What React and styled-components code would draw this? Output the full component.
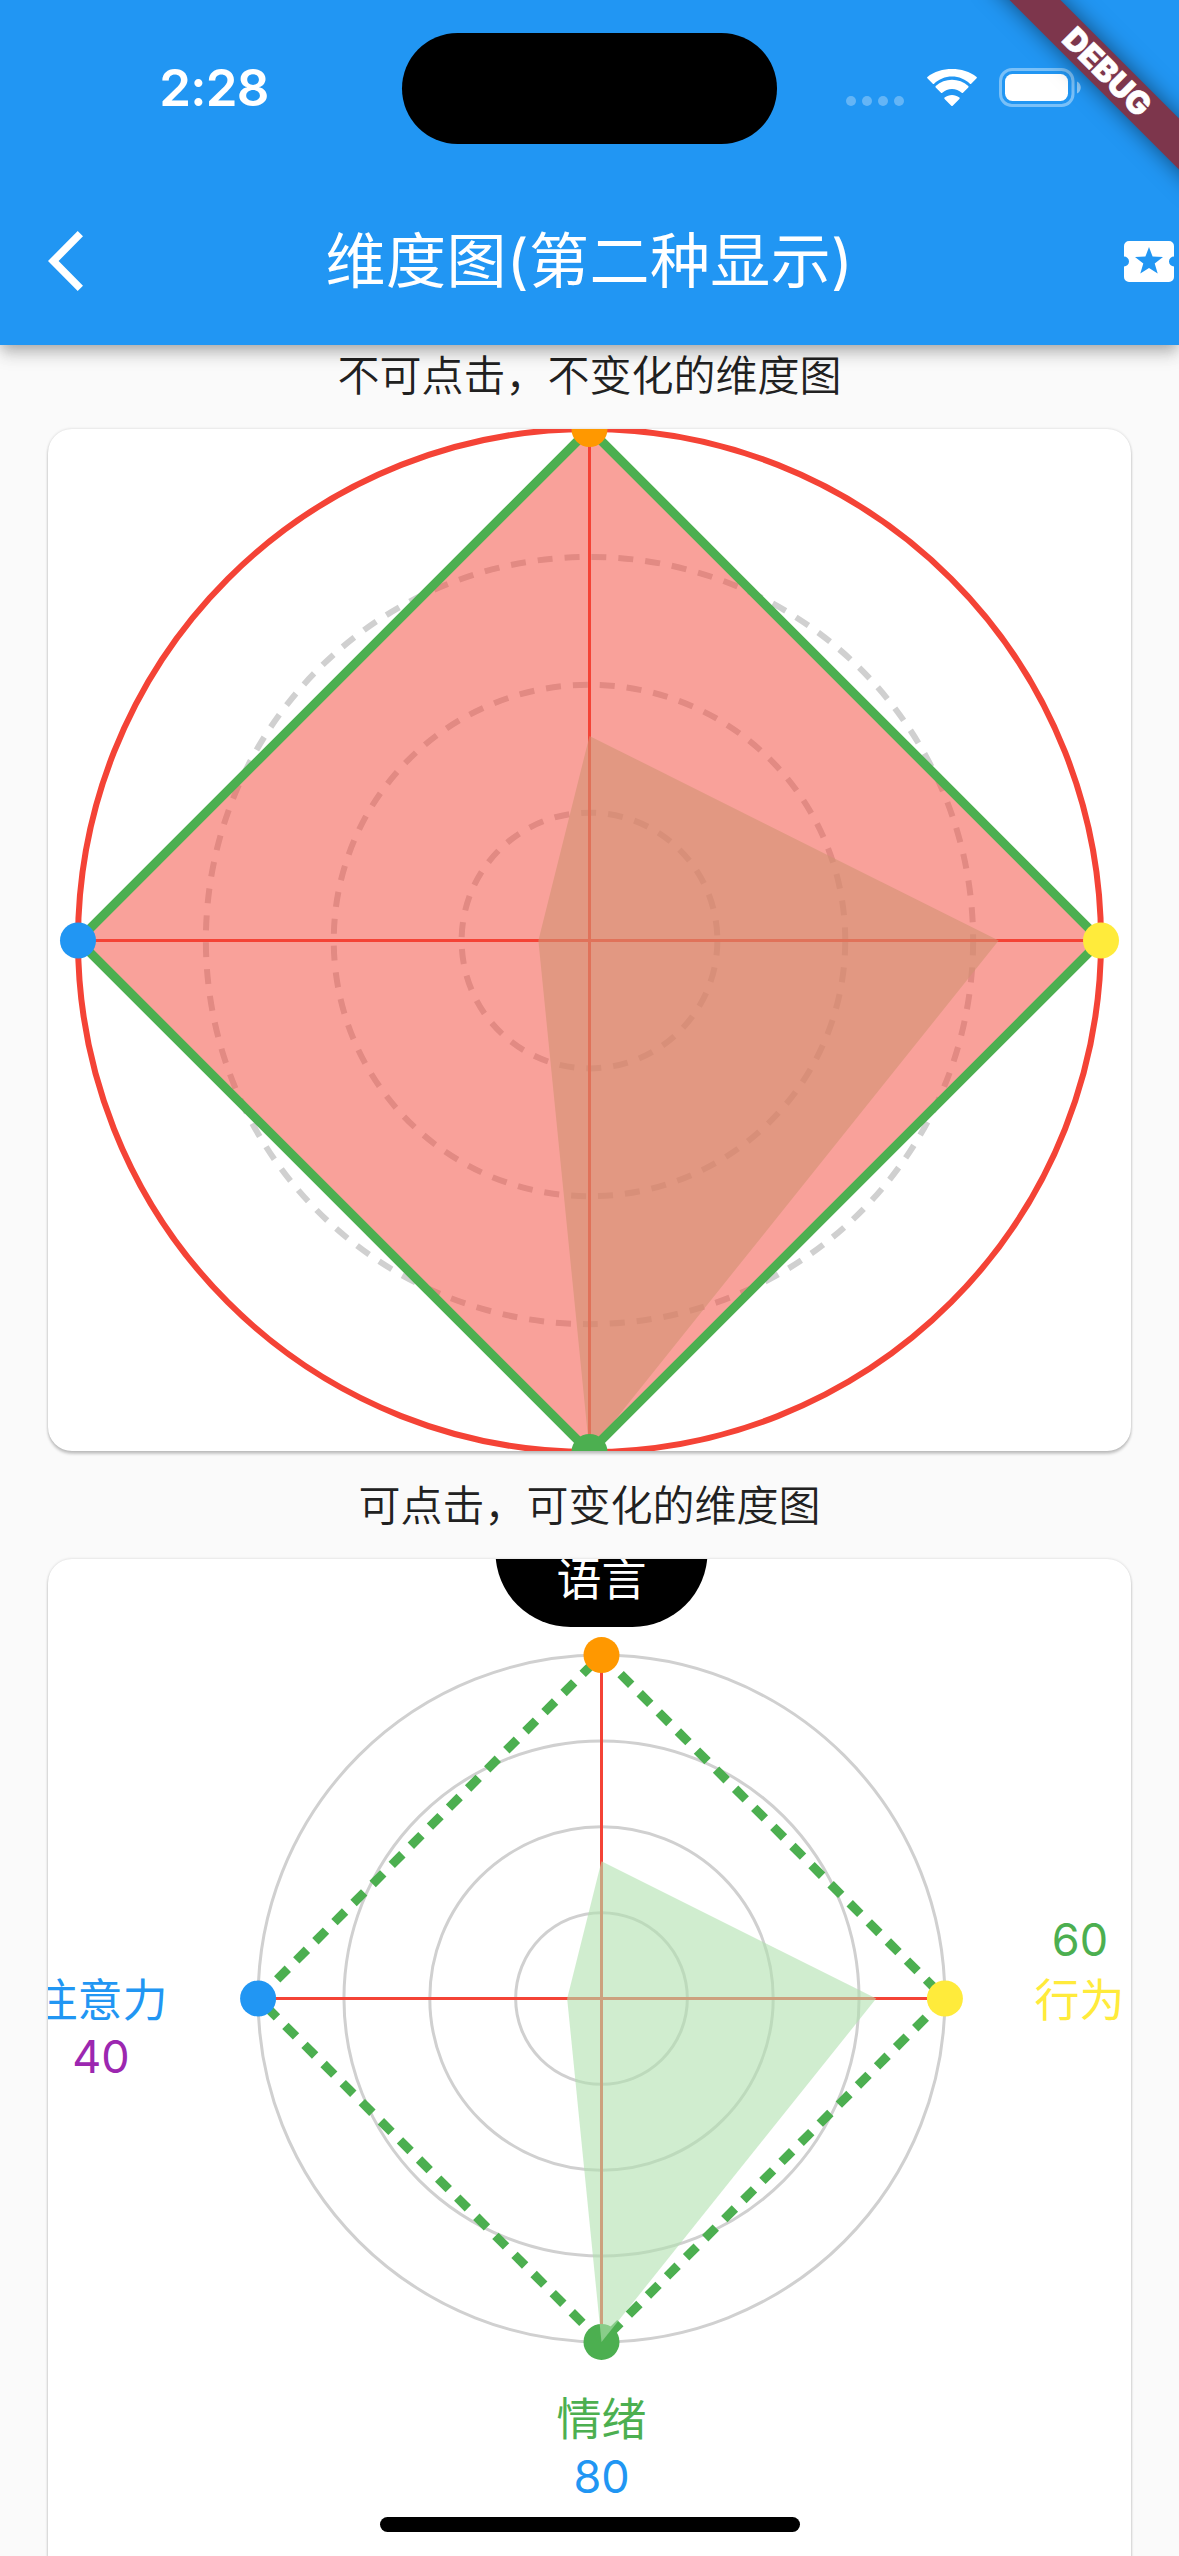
import React from "react";
import styled, { createGlobalStyle } from "styled-components";

const GlobalStyle = createGlobalStyle`
  html, body { margin: 0; padding: 0; background: #fafafa; }
  body { overflow: hidden; }
  * { box-sizing: border-box; }
`;

const FONT = `Inter, "Noto Sans CJK SC", sans-serif`;

const Screen = styled.div`
  position: relative;
  display: flex;
  flex-direction: column;
  width: 1179px;
  height: 2556px;
  overflow: hidden;
  background: #fafafa;
  font-family: ${FONT};
`;

const Header = styled.header`
  position: relative;
  z-index: 1;
  flex: none;
  height: 345px;
  background: #2196f3;
  color: #fff;
  box-shadow: 0 6px 12px -3px rgba(0, 0, 0, 0.2), 0 12px 15px rgba(0, 0, 0, 0.1),
    0 3px 20px rgba(0, 0, 0, 0.1);
`;

const StatusBar = styled.div`
  display: grid;
  grid-template-columns: 402px 375px 402px;
  align-items: center;
  height: 177px;
`;

const Clock = styled.div`
  padding-left: 26px;
  text-align: center;
  font-size: 51px;
  line-height: 58px;
  padding-bottom: 2px;
  font-weight: 600;
  letter-spacing: -0.8px;
`;

const Island = styled.div`
  height: 111px;
  border-radius: 56px;
  background: #000;
`;

const StatusIcons = styled.div`
  display: flex;
  align-items: center;
  height: 40px;
  padding-left: 69px;
`;

const Signal = styled.div`
  display: flex;
  align-self: flex-end;
  gap: 6px;
  margin: 0 23px 3px 0;
`;

const SignalDot = styled.i`
  width: 10px;
  height: 10px;
  border-radius: 50%;
  background: rgba(255, 255, 255, 0.3);
`;

const NavBar = styled.div`
  display: grid;
  grid-template-columns: 120px 1fr 120px;
  align-items: center;
  height: 168px;
`;

const BackButton = styled.button`
  display: flex;
  padding: 0 0 0 48px;
  border: 0;
  background: none;
`;

const Title = styled.h1`
  margin: 0;
  text-align: center;
  font-size: 60px;
  line-height: 72px;
  font-weight: 400;
  letter-spacing: 0.4px;
  white-space: nowrap;
`;

const Action = styled.button`
  display: flex;
  justify-content: flex-end;
  padding: 0 5px 0 0;
  border: 0;
  background: none;
`;

const Ribbon = styled.div`
  position: absolute;
  top: 54px;
  left: 957px;
  z-index: 2;
  width: 300px;
  height: 36px;
  transform: rotate(45deg);
  background: #7d364c;
  box-shadow: 0 0 22px rgba(0, 0, 0, 0.5);
  color: #fff;
  text-align: center;
  font-size: 31.5px;
  line-height: 36px;
  font-weight: 900;
  -webkit-text-stroke: 0.6px #fff;
`;

const Body = styled.main`
  display: flex;
  flex-direction: column;
`;

const Caption = styled.p`
  height: ${(p) => p.$height}px;
  margin: 0;
  padding-top: ${(p) => p.$top}px;
  text-align: center;
  font-size: 42px;
  line-height: 60px;
  font-weight: 350;
  color: #212121;
`;

const Card = styled.section`
  flex: none;
  margin: 0 48px;
  height: 1022px;
  border-radius: 24px;
  overflow: hidden;
  background: #fff;
  box-shadow: 0 3px 3px rgba(0, 0, 0, 0.2), 0 0 3px rgba(0, 0, 0, 0.16);
`;

const Chart = styled.svg`
  display: block;
  width: 1083px;
  height: 1023px;
`;

const ChartText = styled.text`
  font-family: ${FONT};
  font-size: 45px;
  text-anchor: middle;
  fill: ${(p) => p.$color};
`;

const HomeIndicator = styled.div`
  position: absolute;
  left: 380px;
  bottom: 24px;
  width: 420px;
  height: 15px;
  border-radius: 8px;
  background: #000;
`;

const VALUES = [0.4, 0.8, 1, 0.1];
const DOT_COLORS = ["#ff9800", "#ffeb3b", "#4caf50", "#2196f3"];

function vertices(cx, cy, r, values) {
  const [t, ri, b, l] = values;
  return [
    [cx, cy - r * t],
    [cx + r * ri, cy],
    [cx, cy + r * b],
    [cx - r * l, cy],
  ];
}

function Axes({ cx, cy, r }) {
  return (
    <g stroke="#f44336" strokeWidth="3">
      <line x1={cx - r} y1={cy} x2={cx + r} y2={cy} />
      <line x1={cx} y1={cy - r} x2={cx} y2={cy + r} />
    </g>
  );
}

function Dots({ points }) {
  return points.map(([x, y], i) => <circle key={i} cx={x} cy={y} r="18" fill={DOT_COLORS[i]} />);
}

function Area({ cx, cy, r }) {
  return <polygon points={vertices(cx, cy, r, VALUES).join(" ")} fill="#b1e1af" fillOpacity="0.6" />;
}

function StaticRadar() {
  const cx = 541.5;
  const cy = 511.5;
  const r = 511.5;
  const outer = vertices(cx, cy, r, [1, 1, 1, 1]);
  return (
    <Chart viewBox="0 0 1083 1023">
      {[0.25, 0.5, 0.75].map((k) => (
        <circle key={k} cx={cx} cy={cy} r={r * k} fill="none" stroke="#d0d0d0" strokeWidth="6" strokeDasharray="15 12" />
      ))}
      <circle cx={cx} cy={cy} r={r} fill="none" stroke="#f44336" strokeWidth="6" />
      <Axes cx={cx} cy={cy} r={r} />
      <Area cx={cx} cy={cy} r={r} />
      <polygon points={outer.join(" ")} fill="#f44336" fillOpacity="0.5" />
      <polygon points={outer.join(" ")} fill="none" stroke="#4caf50" strokeWidth="9" />
      <Dots points={outer} />
    </Chart>
  );
}

function InteractiveRadar() {
  const cx = 553.5;
  const cy = 439.5;
  const r = 343.4;
  const outer = vertices(cx, cy, r, [1, 1, 1, 1]);
  return (
    <Chart viewBox="0 0 1083 1023">
      {[0.25, 0.5, 0.75, 1].map((k) => (
        <circle key={k} cx={cx} cy={cy} r={r * k} fill="none" stroke="#d0d0d0" strokeWidth="3" />
      ))}
      <Axes cx={cx} cy={cy} r={r} />
      {outer.map(([x, y], i) => {
        const [x2, y2] = outer[(i + 1) % 4];
        return <line key={i} x1={x} y1={y} x2={x2} y2={y2} stroke="#4caf50" strokeWidth="9" strokeDasharray="15 12" />;
      })}
      <Dots points={outer} />
      <Area cx={cx} cy={cy} r={r} />
      <rect x="447.5" y="-92" width="212" height="160" rx="75" fill="#000" />
      <ChartText x={cx} y="37" $color="#fff">语言</ChartText>
      <ChartText x="1032" y="396.5" $color="#4caf50">60</ChartText>
      <ChartText x="1031.5" y="457.5" $color="#ffeb3b">行为</ChartText>
      <ChartText x={cx} y="877" $color="#4caf50">情绪</ChartText>
      <ChartText x={cx} y="933.5" $color="#2196f3">80</ChartText>
      <ChartText x="52" y="457.5" $color="#2196f3">注意力</ChartText>
      <ChartText x="53" y="513.5" $color="#9c27b0">40</ChartText>
    </Chart>
  );
}

function WifiIcon() {
  return (
    <svg width="50" height="37" viewBox="0 0 50 37" fill="#fff">
      <path d="M25 7.6c6.9 0 13.2 2.7 17.9 7.1.4.4.9.3 1.3 0l5.4-5.4c.4-.4.4-1 0-1.4C36.2-2.5 13.8-2.5.4 7.9c-.4.4-.4 1 0 1.4l5.4 5.4c.4.3.9.4 1.3 0C11.8 10.3 18.1 7.6 25 7.6z" />
      <path d="M25 20.1c3.7 0 7.1 1.4 9.7 3.7.4.4 1 .4 1.3 0l5.3-5.4c.4-.4.4-1 0-1.4-9.2-8.5-23.4-8.5-32.6 0-.4.4-.4 1 0 1.4l5.3 5.4c.3.4.9.4 1.3 0 2.6-2.3 6-3.7 9.7-3.7z" />
      <path d="M32.4 30c.4-.4.4-1 0-1.4-4.3-3.6-10.5-3.6-14.8 0-.4.4-.4 1 0 1.4l6.700 6.700c.4.4 1 .4 1.400 0z" />
    </svg>
  );
}

const Wifi = styled.span`
  display: flex;
  margin: 0 22px 2px 0;
`;

function BatteryIcon() {
  return (
    <svg width="83" height="42" viewBox="0 0 83 42">
      <rect x="1.5" y="1.5" width="72.5" height="36" rx="11.5" fill="none" stroke="#fff" strokeOpacity="0.4" strokeWidth="3" />
      <rect x="6" y="6" width="63" height="27" rx="7.5" fill="#fff" />
      <path d="M78 13.5c5 2 5 10 0 12z" fill="#fff" fillOpacity="0.5" />
    </svg>
  );
}

export default function App() {
  return (
    <Screen>
      <GlobalStyle />
      <Header>
        <StatusBar>
          <Clock>2:28</Clock>
          <Island />
          <StatusIcons>
            <Signal>
              <SignalDot /><SignalDot /><SignalDot /><SignalDot />
            </Signal>
            <Wifi><WifiIcon /></Wifi>
            <BatteryIcon />
          </StatusIcons>
        </StatusBar>
        <NavBar>
          <BackButton aria-label="Back">
            <svg width="36" height="60" viewBox="0 0 36 60">
              <path d="M35 5.3 29.7 0 0 30l29.7 30 5.3-5.3L10.6 30z" fill="#fff" />
            </svg>
          </BackButton>
          <Title>维度图(第二种显示)</Title>
          <Action aria-label="Ticket">
            <svg width="50" height="41" viewBox="0 0 50 41">
              <path
                fillRule="evenodd"
                fill="#fff"
                d="M5 0h40a5 5 0 0 1 5 5v10.5a5 5 0 0 0 0 10V36a5 5 0 0 1-5 5H5a5 5 0 0 1-5-5V25.5a5 5 0 0 0 0-10V5a5 5 0 0 1 5-5zM25 6l-3.6 9.600L11 16l8.300 6.400L16.300 32.500 25 27l8.700 5.500-3-10.100L39 16l-10.400-.4z"
              />
            </svg>
          </Action>
        </NavBar>
      </Header>
      <Ribbon>DEBUG</Ribbon>
      <Body>
        <Caption $height={84} $top={1}>不可点击，不变化的维度图</Caption>
        <Card><StaticRadar /></Card>
        <Caption $height={108} $top={25}>可点击，可变化的维度图</Caption>
        <Card><InteractiveRadar /></Card>
      </Body>
      <HomeIndicator />
    </Screen>
  );
}
